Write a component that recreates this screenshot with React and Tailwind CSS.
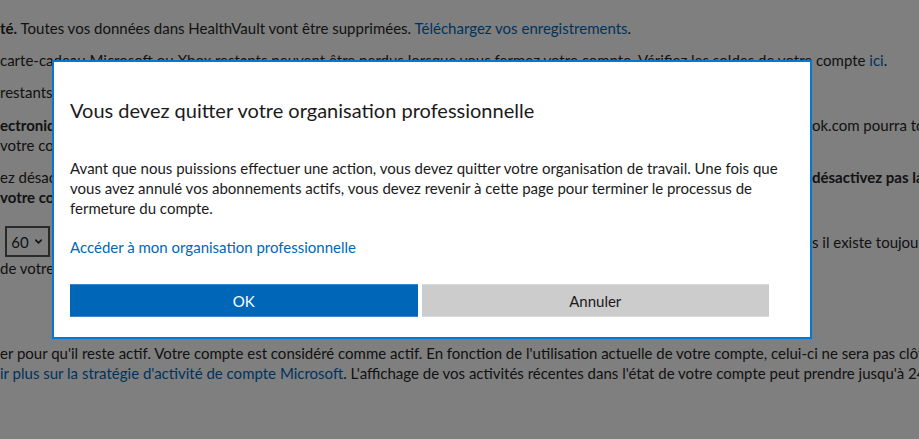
import { ChevronDown } from "lucide-react";

const font = { fontFamily: 'Lato, "Noto Sans", sans-serif' };

const Link = ({ children }) => (
  <span className="text-[#0067b8]">{children}</span>
);

// a line of the page that is split by the dialog: left part, then the part right of it
const Split = ({ left, right }) => (
  <div className="flex">
    <span className="w-[812px] shrink-0 overflow-hidden">{left}</span>
    <span>{right}</span>
  </div>
);

const App = () => {
  return (
    <div
      className="relative w-[919px] h-[439px] overflow-hidden bg-white text-[15px] leading-5 text-[#262626]"
      style={font}
    >
      {/* page behind the dialog */}
      <div className="pt-[18px] whitespace-nowrap">
        <p>
          <b>té.</b> Toutes vos données dans HealthVault vont être supprimées.{" "}
          <Link>Téléchargez vos enregistrements</Link>.
        </p>
        <p className="mt-3">
          carte-cadeau Microsoft ou Xbox restants peuvent être perdus lorsque
          vous fermez votre compte. Vérifiez les soldes de votre compte{" "}
          <Link>ici</Link>.
        </p>
        <p className="mt-3">restants sur votre compte seront perdus.</p>
        <div className="mt-[13px]">
          <Split
            left={
              <>
                <b>ectronique.</b> Votre adresse de messagerie liée à Outl
              </>
            }
            right="ok.com pourra toujours"
          />
          <p>votre compte sera fermé.</p>
        </div>
        <div className="mt-3">
          <Split
            left="ez désactivé votre compte, ne le réactivez et ne"
            right={<b>désactivez pas la</b>}
          />
          <p>
            <b>votre compte</b>
          </p>
        </div>
        <div className="mt-[19px] flex items-center">
          <div className="ml-[5px] flex h-[31px] w-[45px] shrink-0 items-center justify-center gap-[4px] border-2 border-[#555]">
            <span>60</span>
            <ChevronDown size={11} strokeWidth={3.5} />
          </div>
          <span className="ml-[762px] shrink-0">s il existe toujours des risques</span>
        </div>
        <p className="mt-[1px]">de votre compte pendant cette période.</p>
        <p className="mt-[65px]">
          er pour qu'il reste actif. Votre compte est considéré comme actif. En
          fonction de l'utilisation actuelle de votre compte, celui-ci ne sera
          pas clôturé.
          <br />
          <Link>ir plus sur la stratégie d'activité de compte Microsoft</Link>.
          L'affichage de vos activités récentes dans l'état de votre compte
          peut prendre jusqu'à 24 heures.
        </p>
      </div>

      {/* dim overlay */}
      <div className="absolute inset-0 bg-black/50" />

      {/* dialog */}
      <div className="absolute left-[52px] top-[60px] w-[760px] h-[279px] border-2 border-[#0078d4] bg-white px-4 pt-[34px] text-black">
        <h2 className="text-[20px] leading-7 font-normal text-[#1b1b1b]">
          Vous devez quitter votre organisation professionnelle
        </h2>
        <p className="mt-[34px] w-[724px] text-[#1b1b1b]">
          Avant que nous puissions effectuer une action, vous devez quitter
          votre organisation de travail. Une fois que vous avez annulé vos
          abonnements actifs, vous devez revenir à cette page pour terminer le
          processus de fermeture du compte.
        </p>
        <p className="mt-[19px]">
          <Link>Accéder à mon organisation professionnelle</Link>
        </p>
        <div className="mt-[27px] flex w-[699px] gap-1">
          <button className="h-[33px] flex-1 border-y border-[#3a86c6] bg-[#0067b8] text-white">
            OK
          </button>
          <button className="h-[33px] flex-1 border-y border-[#dadada] bg-[#cccccc] text-[#1b1b1b]">
            Annuler
          </button>
        </div>
      </div>
    </div>
  );
};

export default App;
